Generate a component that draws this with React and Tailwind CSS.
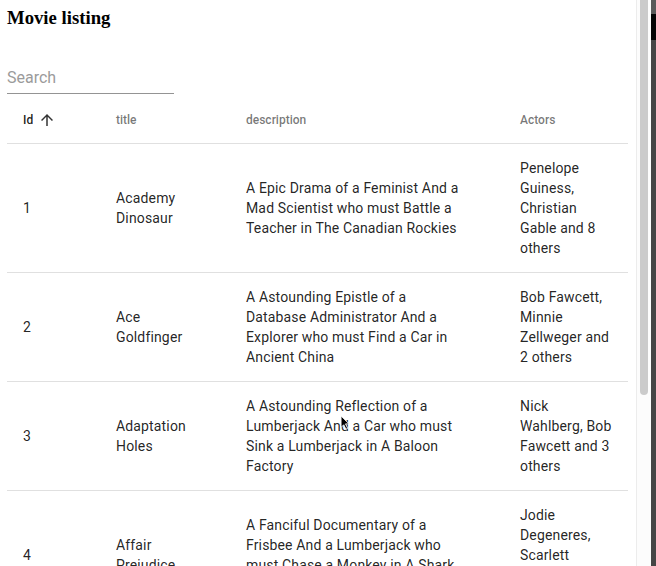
import React from 'react';

// lines are kept as in the listing so the wrap matches
const movies = [
  {
    id: 1,
    title: ['Academy', 'Dinosaur'],
    description: ['A Epic Drama of a Feminist And a', 'Mad Scientist who must Battle a', 'Teacher in The Canadian Rockies'],
    actors: ['Penelope', 'Guiness,', 'Christian', 'Gable and 8', 'others'],
  },
  {
    id: 2,
    title: ['Ace', 'Goldfinger'],
    description: ['A Astounding Epistle of a', 'Database Administrator And a', 'Explorer who must Find a Car in', 'Ancient China'],
    actors: ['Bob Fawcett,', 'Minnie', 'Zellweger and', '2 others'],
  },
  {
    id: 3,
    title: ['Adaptation', 'Holes'],
    description: ['A Astounding Reflection of a', 'Lumberjack And a Car who must', 'Sink a Lumberjack in A Baloon', 'Factory'],
    actors: ['Nick', 'Wahlberg, Bob', 'Fawcett and 3', 'others'],
  },
  {
    id: 4,
    title: ['Affair', 'Prejudice'],
    description: ['A Fanciful Documentary of a', 'Frisbee And a Lumberjack who', 'must Chase a Monkey in A Shark', 'Tank'],
    actors: ['Jodie', 'Degeneres,', 'Scarlett', 'Damon and 3', 'others'],
  },
];

const headCell = 'px-4 pt-[4px] text-left align-middle text-[12px] font-medium leading-[18px] text-[rgba(0,0,0,0.54)]';
const bodyCell = 'px-4 py-[14px] align-middle text-[14px] leading-[20px] tracking-[0.15px] text-[rgba(0,0,0,0.87)] whitespace-nowrap';

const Lines = ({ lines }) =>
  lines.map((l, i) => (
    <span key={i} className="block">
      {l}
    </span>
  ));

const ArrowUp = () => (
  <svg viewBox="0 0 24 24" className="ml-[5px] h-[18px] w-[18px] fill-[rgba(0,0,0,0.8)]">
    <path d="M4 12l1.41 1.41L11 7.83V20h2V7.83l5.58 5.59L20 12l-8-8-8 8z" />
  </svg>
);

const Cursor = () => (
  <svg viewBox="0 0 12 18" className="absolute left-[340px] top-[415px] h-[16px] w-[11px]">
    <path d="M1 1 L1 14 L4 11 L6.5 16 L8.5 15 L6 10 L10 10 Z" fill="#000" stroke="#fff" strokeWidth="1" />
  </svg>
);

export default function App() {
  return (
    <div className="relative flex h-[566px] w-[656px] overflow-hidden bg-white" style={{ fontFamily: 'Roboto, "Liberation Sans", sans-serif' }}>
      <div className="w-[636px] shrink-0 overflow-hidden pl-[7px] pt-[7px]">
        <h3 className="text-[18.72px] font-bold leading-[21px] text-black" style={{ fontFamily: '"Liberation Serif", "Times New Roman", serif' }}>
          Movie listing
        </h3>

        <div className="mt-[33px] w-[167px] border-b border-[rgba(0,0,0,0.42)]">
          <input
            placeholder="Search"
            className="block w-full bg-transparent pb-[4px] pt-[5px] text-[16px] leading-[23px] text-[rgba(0,0,0,0.87)] outline-none placeholder:text-[#9b9b9b]"
          />
        </div>

        <table className="w-[621px] table-fixed">
          <colgroup>
            <col className="w-[93px]" />
            <col className="w-[130px]" />
            <col className="w-[274px]" />
            <col className="w-[124px]" />
          </colgroup>
          <thead>
            <tr className="h-[49px] border-b border-[#e0e0e0]">
              <th className={headCell}>
                <span className="flex items-center text-[rgba(0,0,0,0.87)]">
                  Id
                  <ArrowUp />
                </span>
              </th>
              <th className={headCell}>title</th>
              <th className={headCell}>description</th>
              <th className={headCell}>Actors</th>
            </tr>
          </thead>
          <tbody>
            {movies.map((m) => (
              <tr key={m.id} className="border-b border-[#e0e0e0]">
                <td className={bodyCell}>{m.id}</td>
                <td className={bodyCell}>
                  <Lines lines={m.title} />
                </td>
                <td className={bodyCell}>
                  <Lines lines={m.description} />
                </td>
                <td className={bodyCell}>
                  <Lines lines={m.actors} />
                </td>
              </tr>
            ))}
          </tbody>
        </table>
      </div>

      {/* scrollbar */}
      <div className="relative w-[15px] shrink-0 border-l border-[#ececec] bg-[#fcfcfc]">
        <div className="ml-[3px] h-[395px] w-[8px] rounded-b-full bg-[#cbcbcb]" />
      </div>

      {/* dark strip of the host window */}
      <div className="flex w-[5px] shrink-0 flex-col bg-[#454545]">
        <div className="h-[14px] bg-[#5a5a5a]" />
        <div className="h-[26px] bg-[#050505]" />
      </div>

      <Cursor />
    </div>
  );
}
